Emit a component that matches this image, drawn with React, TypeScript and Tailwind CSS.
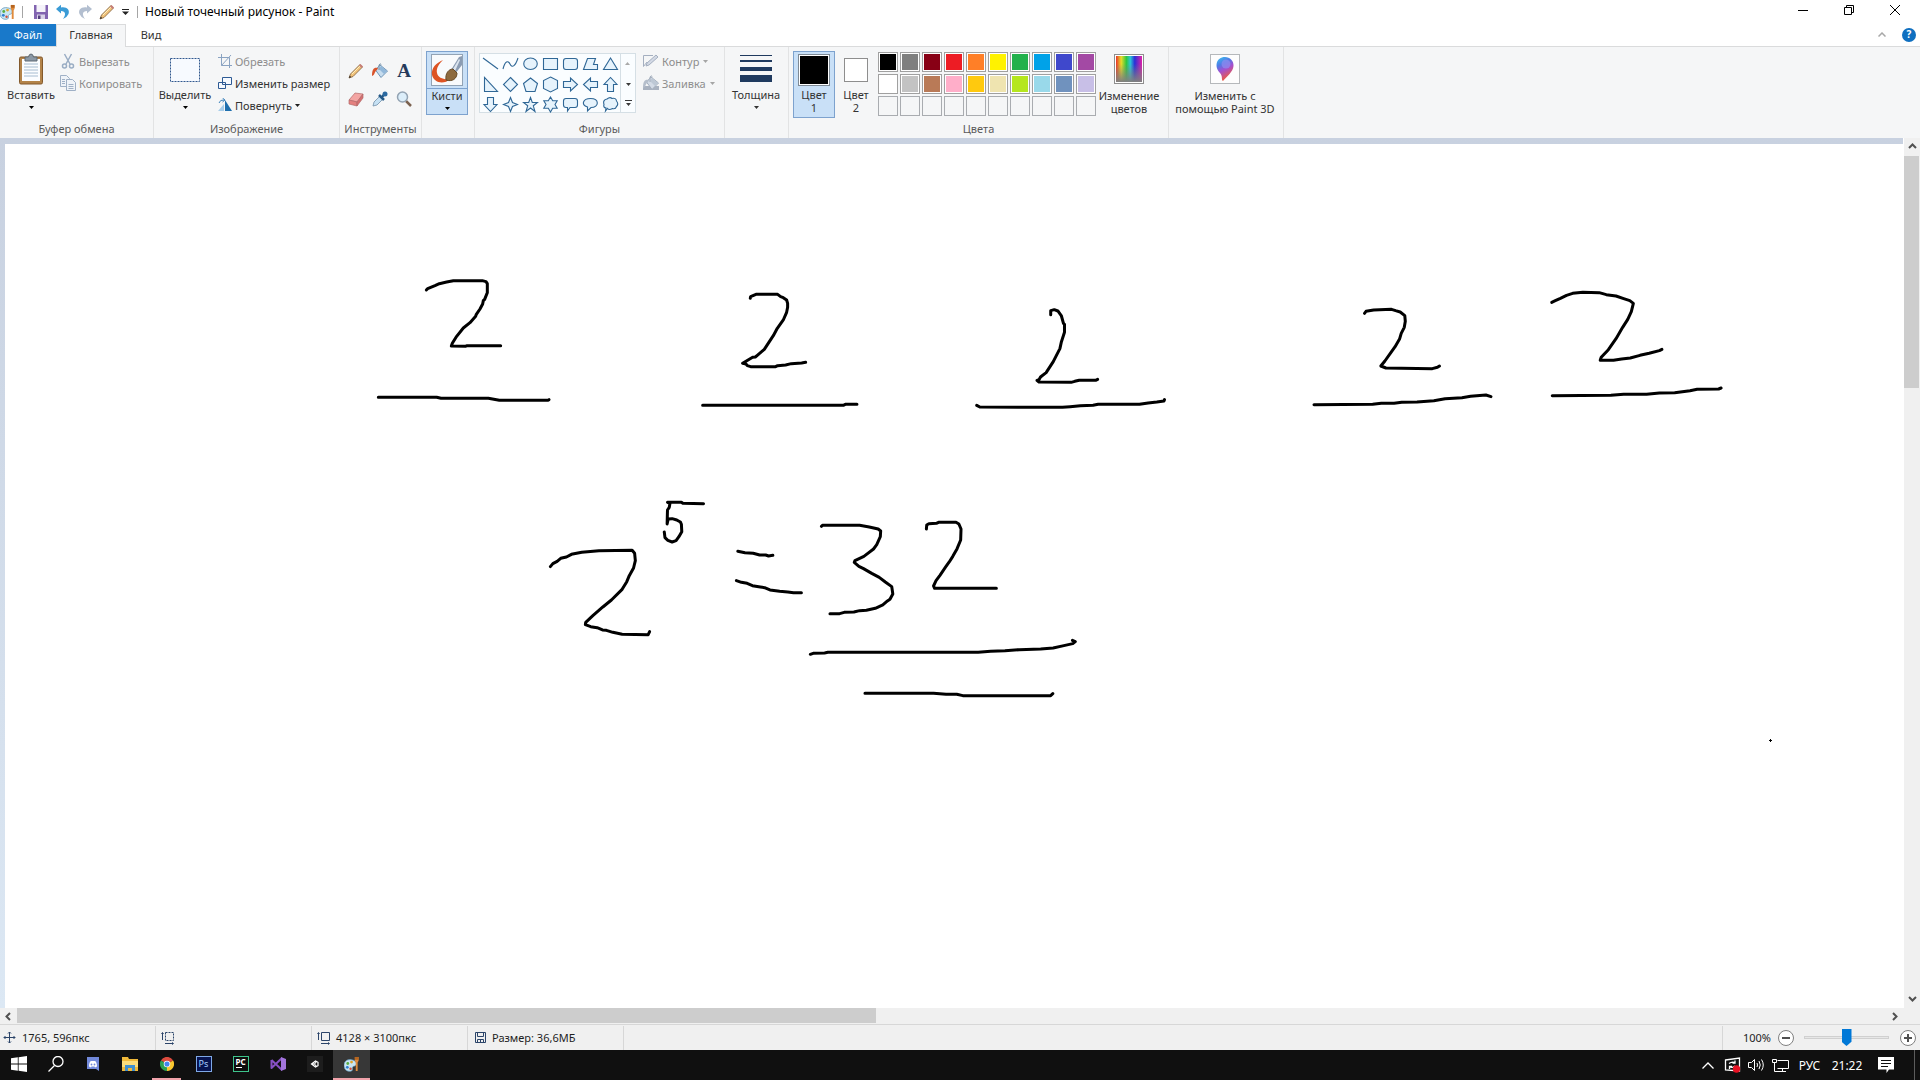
import React, { PropsWithChildren } from "react";

const palette = [
    "#000000", "#7f7f7f", "#880015", "#ed1c24", "#ff7f27", "#fff200", "#22b14c", "#00a2e8", "#3f48cc", "#a349a4",
    "#ffffff", "#c3c3c3", "#b97a57", "#ffaec9", "#ffc90e", "#efe4b0", "#b5e61d", "#99d9ea", "#7092be", "#c8bfe7",
    "", "", "", "", "", "", "", "", "", "",
];

const shapes: { name: string; d: string }[] = [
    { name: "Линия", d: "M1 2 16 13" },
    { name: "Кривая", d: "M1 13C3 5 6 4 8 8C10 12 13 11 16 2" },
    { name: "Овал", d: "M8.500 2C17.500 2 17.500 13.500 8.500 13.500C-.5 13.500 -.5 2 8.500 2Z" },
    { name: "Прямоугольник", d: "M1.500 2.500H15.500V13.500H1.500Z" },
    { name: "Скругленный прямоугольник", d: "M4 2.500H13Q15.500 2.500 15.500 5V11Q15.500 13.500 13 13.500H4Q1.500 13.500 1.500 11V5Q1.500 2.500 4 2.500Z" },
    { name: "Многоугольник", d: "M1.500 13.500 5.500 2.500H13.500L11.500 8.500H15.500V13.500Z" },
    { name: "Треугольник", d: "M8.500 2 15.500 13.500H1.500Z" },
    { name: "Прямоугольный треугольник", d: "M2.500 1.500V15.500H15.500Z" },
    { name: "Ромб", d: "M8.500 1.500 15.500 8.500 8.500 15.500 1.500 8.500Z" },
    { name: "Пятиугольник", d: "M8.500 2 15.500 7.500 13 15.500H4L1.500 7.500Z" },
    { name: "Шестиугольник", d: "M8.500 1 15.500 4.500V12.500L8.500 16 1.500 12.500V4.500Z" },
    { name: "Стрелка вправо", d: "M1.500 5.500H8.500V2L15.500 8.500 8.500 15V11.500H1.500Z" },
    { name: "Стрелка влево", d: "M15.500 5.500H8.500V2L1.500 8.500 8.500 15V11.500H15.500Z" },
    { name: "Стрелка вверх", d: "M5.500 15.500V8.500H2L8.500 1.500 15 8.500H11.500V15.500Z" },
    { name: "Стрелка вниз", d: "M5.500 1.500V8.500H2L8.500 15.500 15 8.500H11.500V1.500Z" },
    { name: "Четырехконечная звезда", d: "M8.500 1.500 10.500 6.500 15.500 8.500 10.500 10.500 8.500 15.500 6.500 10.500 1.500 8.500 6.500 6.500Z" },
    { name: "Пятиконечная звезда", d: "M8.500 1.500 10.300 6.500H15.500L11.300 9.800 13 15.500 8.500 12 4 15.500 5.700 9.800 1.500 6.500H6.700Z" },
    { name: "Шестиконечная звезда", d: "M8.500 1 10.700 4.700H15.200L13 8.500 15.200 12.300H10.700L8.500 16 6.300 12.300H1.800L4 8.500 1.800 4.700H6.300Z" },
    { name: "Выноска", d: "M4 2.500H13Q15.500 2.500 15.500 5V9Q15.500 11.500 13 11.500H8L5.500 15V11.500H4Q1.500 11.500 1.500 9V5Q1.500 2.500 4 2.500Z" },
    { name: "Овальная выноска", d: "M8.500 2.500C17.500 2.500 17.500 11.500 9 11.500L5.500 15V11C-1 9 .5 2.500 8.500 2.500Z" },
    { name: "Облако", d: "M5 3Q8 .5 10 2.500 14 1.500 14.500 5 17 8 14.500 10.500 13.500 13.500 10.500 12.500 7 14.500 5.500 12.500L3.500 15 4 12Q1 11.500 2 8.500 .5 4 5 3Z" },
];

// Freehand strokes, grouped by the area they were drawn in
const drawings: { transform: string; strokes: string[] }[] = [
    {
        transform: "translate(360 260) scale(.3333)",
        strokes: [
            "199,90 203,86 225,77 238,71 260,66 280,62 367,62 378,65 382,71 382,98 374,118 370,122 368,132 360,147 349,163 347,169 330,188 310,204 290,229 277,250 274,258 317,259 320,257 422,257",
            "55,412 230,412 243,415 385,415 418,421 564,421 567,419",
            "1171,115 1172,110 1188,103 1253,103 1262,110 1270,113 1280,120 1283,130 1283,142 1280,157 1270,180 1252,205 1240,227 1213,268 1192,286 1186,291 1178,292 1148,310 1158,312 1162,317 1172,320 1247,320 1253,317 1277,315 1294,311 1325,309 1337,307",
            "1028,436 1450,436 1456,433 1491,433",
        ],
    },
    {
        transform: "translate(940 280) scale(.5102 .3333)",
        strokes: [
            "217,104 217,92 224,89 231,93 238,108 242,130 244,133 244,157 238,185 235,206 222,245 208,278 197,291 194,299 190,301 194,306 257,307 264,304 273,301 305,301 309,298",
            "72,376 78,381 240,382 255,380 275,377 300,376 310,373 391,373 408,369 425,366 439,363 440,359",
            "832,100 835,94 850,90 885,88 893,92 902,96 911,107 912,124 910,142 904,160 901,176 892,200 884,217 872,243 864,258 874,264 965,266 975,262 979,258",
            "733,374 848,373 865,370 890,370 905,367 935,366 968,362 990,356 1023,353 1040,349 1070,345 1080,350",
            "1199,67 1206,62 1216,55 1228,46 1240,40 1260,37 1292,38 1306,44 1325,48 1340,56 1352,62 1359,70 1355,95 1348,118 1338,142 1325,176 1310,209 1296,232 1294,241 1320,241 1336,237 1353,234 1372,226 1390,220 1410,212 1415,208",
            "1200,347 1315,346 1340,343 1385,343 1410,339 1440,338 1470,332 1484,328 1526,327 1531,324",
        ],
    },
    {
        transform: "translate(530 480) scale(.3571 .3333)",
        strokes: [
            "57,260 64,251 76,244 86,235 102,231 116,223 145,217 193,212 286,211 293,220 295,242 290,264 278,287 271,305 258,328 228,360 204,381 176,407 156,427 155,434 170,440 188,443 203,450 214,451 232,457 258,463 331,464 335,455",
            "486,71 428,70 424,67 385,67 392,70 390,82 385,90 384,132 387,117 398,116 411,120 421,126 424,133 425,155 417,170 409,182 398,186 386,181 378,173 376,156",
            "582,214 602,218 625,220 643,225 660,225 668,228 680,226",
            "578,302 592,307 608,310 623,317 645,321 657,323 672,330 699,334 722,336 738,338 760,338",
            "816,139 819,136 923,136 950,141 975,147 982,153 981,170 971,194 962,207 935,229 910,242 908,247 921,259 934,266 957,280 978,292 995,306 1013,320 1016,342 1008,358 1001,363 988,375 967,385 942,391 923,392 907,396 880,397 867,401 840,401",
            "1110,147 1111,135 1117,131 1138,130 1144,127 1193,127 1201,132 1207,147 1206,180 1196,206 1184,229 1174,246 1164,261 1148,286 1137,302 1130,318 1133,325 1306,325",
            "785,523 793,520 825,519 834,517 1255,517 1290,514 1330,512 1370,509 1430,507 1465,504 1495,497 1520,491 1527,485 1519,481",
            "938,640 1130,640 1165,643 1195,643 1212,647 1458,647 1464,641",
        ],
    },
];

interface GroupProps {
    label?: string;
    className: string;
}

const Group: React.FC<PropsWithChildren<GroupProps>> = ({ label, className, children }) => (
    <section aria-label={label} className={`flex shrink-0 flex-col justify-between border-r border-[#e2e3e4] pt-1 ${className}`}>
        <div className="flex">{children}</div>
        {label && <p className="pb-[3px] text-center text-[#5a5a5a]">{label}</p>}
    </section>
);

const Caret = ({ className = "text-[#1e1e1e]" }: { className?: string }) => (
    <svg viewBox="0 0 5 3" className={`h-[3px] w-[5px] shrink-0 ${className}`} fill="currentColor">
        <path d="M0 0h5L2.500 3Z" />
    </svg>
);

const Pencil = () => (
    <svg viewBox="0 0 16 16" className="size-4">
        <path d="M1 15 2.500 11 12 1.500 14.500 4 5 13.500Z" fill="#f1c27a" stroke="#8a6a45" strokeWidth=".9" />
        <path d="m4 11 8-8" stroke="#fff0bd" />
        <path d="m11 2.500 1.500-1.500 2.500 2.500-1.500 1.500Z" fill="#c77e78" />
        <path d="m1 15 .8-2.200L3.200 14Z" fill="#222" />
    </svg>
);

const Bucket = ({ muted = false }: { muted?: boolean }) => (
    <svg viewBox="0 0 18 16" className="h-4 w-[18px]">
        {muted && <path d="M1 11h16v4H1Z" fill="#a9b2c0" />}
        <path d="M9 2 16.500 8 10 14.500 4.500 7Z" fill={muted ? "#d3dbe6" : "#c6dcee"} stroke={muted ? "#a3aebd" : "#6e94b5"} />
        <path d="m8 6 5 5 3-3-6-5Z" fill={muted ? "#bdc8d5" : "#92b8da"} />
        <path d="M8 7V2Q9-.5 10.500 2" fill="none" stroke={muted ? "#a3aebd" : "#7892a8"} />
        <path d="M7 5C3 4 1 6 1 13C4 12 3 9 6 7Z" fill={muted ? "#b5becb" : "#d8532b"} />
    </svg>
);

const PaletteIcon = () => (
    <svg viewBox="0 0 17 17" className="size-4">
        <path d="M8 4C2 3 0 7 0 10C0 15 4 17 8 16C10 15 8 12 10 11C14 11 15 5 8 4Z" fill="#c9e6f3" stroke="#6297b8" strokeWidth=".8" />
        <circle cx="4" cy="8" r="1.500" fill="#58ad43" />
        <circle cx="8" cy="6.500" r="1.500" fill="#e0a52e" />
        <circle cx="3.500" cy="12" r="1.500" fill="#2f7ed0" />
        <circle cx="7" cy="13.500" r="1.300" fill="#d1503c" />
        <path d="M11.500 1h4v4l-1 2v9h-2V7l-1-2Z" fill="#e08b3c" />
        <path d="M11.500 1h4v3h-4Z" fill="#b5651f" />
    </svg>
);

const titleTools = [
    {
        name: "Сохранить",
        icon: (
            <svg viewBox="0 0 16 16" className="size-4">
                <path d="M1 1h14v14H1Z" fill="#8264b0" />
                <path d="M3.500 1h9v7h-9Z" fill="#f5f3fa" />
                <path d="M4 10.500h8V15H4Z" fill="#d9d3e8" />
                <path d="M5 11.500h2.500V15H5Z" fill="#55407e" />
            </svg>
        ),
    },
    {
        name: "Отменить",
        icon: (
            <svg viewBox="0 0 16 16" className="size-4">
                <path d="M1 5 6 .8V3.500C12 2.500 15 6 13.500 10Q12 13.500 8 15C11 11 11 7 6 7V9.500Z" fill="#3a9bd6" />
            </svg>
        ),
    },
    {
        name: "Повторить",
        icon: (
            <svg viewBox="0 0 16 16" className="size-4">
                <path d="M15 5 10 .8V3.500C4 2.500 1 6 2.500 10Q4 13.500 8 15C5 11 5 7 10 7V9.500Z" fill="#b3bfd0" />
            </svg>
        ),
    },
    { name: "Карандаш", icon: <Pencil /> },
];

const TitleBar = () => (
    <header className="flex h-6 shrink-0 items-start bg-white">
        <div className="flex h-[23px] items-center">
            <PaletteIcon />
            <span className="ml-1.5 h-3 w-px bg-[#a5a5a5]" />
            <div className="ml-2 flex gap-0.5">
                {titleTools.map((tool) => (
                    <button key={tool.name} aria-label={tool.name} className="grid h-5 w-5 place-items-center">
                        {tool.icon}
                    </button>
                ))}
            </div>
            <button aria-label="Настройка панели быстрого доступа" className="ml-0.5 grid h-5 w-3 place-items-center">
                <svg viewBox="0 0 7 6" className="h-1.5 w-[7px]" fill="#222">
                    <path d="M0 0h7v1H0ZM0 2.500h7L3.500 6Z" />
                </svg>
            </button>
            <span className="ml-1.5 h-3 w-px bg-[#a5a5a5]" />
            <h1 className="ml-[7px] text-[12px] text-black">Новый точечный рисунок - Paint</h1>
        </div>
        <div className="ml-auto flex pr-0.5">
            <button aria-label="Свернуть" className="grid h-5 w-[46px] place-items-center">
                <svg viewBox="0 0 10 10" className="size-2.5" stroke="#000"><path d="M0 5.500h10" /></svg>
            </button>
            <button aria-label="Свернуть в окно" className="grid h-5 w-[46px] place-items-center">
                <svg viewBox="0 0 10 10" className="size-2.5" fill="none" stroke="#000"><path d="M.5 2.500h7v7h-7ZM2.500 2.500v-2h7v7h-2" /></svg>
            </button>
            <button aria-label="Закрыть" className="grid h-5 w-[46px] place-items-center">
                <svg viewBox="0 0 10 10" className="size-2.5" stroke="#000"><path d="m0 0 10 10M10 0 0 10" /></svg>
            </button>
        </div>
    </header>
);

const Tabs = () => (
    <nav className="flex h-[23px] shrink-0 items-stretch border-b border-[#dadbdc] bg-white text-[#333]">
        <button className="w-14 bg-[#1979ca] pb-0.5 text-white">Файл</button>
        <button className="-mb-px w-[70px] border border-b-0 border-[#dadbdc] bg-[#f5f6f7] pb-[3px]">Главная</button>
        <button className="w-[50px] pb-0.5">Вид</button>
        <div className="ml-auto flex items-center gap-4 pr-1 pb-px">
            <button aria-label="Свернуть ленту" className="-mr-1 w-3">
                <svg viewBox="0 0 8 5" className="h-[5px] w-2" fill="none" stroke="#a8a8a8" strokeWidth="1.500"><path d="M.5 4.500 4 1l3.500 3.500" /></svg>
            </button>
            <button aria-label="Справка" className="grid size-3.5 place-items-center rounded-full bg-[#0f6fc0] text-[10px] font-bold text-white">
                ?
            </button>
        </div>
    </nav>
);

const ClipboardGroup = () => (
    <Group label="Буфер обмена" className="w-[154px]">
        <button className="flex w-[60px] flex-col items-center pt-0.5 pl-0.5">
            <svg viewBox="0 0 26 32" className="h-8 w-[26px]">
                <rect x="1.500" y="4" width="23" height="27" rx="1.500" fill="#b38349" stroke="#83592c" />
                <path d="M4 6h18v22H4Z" fill="#fbfdff" />
                <path d="M6 11h14M6 14h14M6 17h14M6 20h14M6 23h14" stroke="#a6bcd0" />
                <path d="M7 4h3.500Q11 1 13 1t2.500 3H19v4H7Z" fill="#8b98a5" stroke="#5d6872" />
            </svg>
            <span className="mt-[3px]">Вставить</span>
            <Caret className="mt-[5px] text-black" />
        </button>
        <div className="text-[#8d8d8d]">
            <button className="flex h-[22px] items-center gap-[3px] pb-0.5">
                <svg viewBox="0 0 16 16" className="size-4" fill="none" stroke="#9aadc4" strokeWidth="1.500">
                    <path d="m4.500 1 5.500 10M11.500 1 6 11" />
                    <circle cx="4.500" cy="13" r="2" />
                    <circle cx="11.500" cy="13" r="2" />
                </svg>
                Вырезать
            </button>
            <button className="flex h-[22px] items-center gap-[3px] pb-0.5">
                <svg viewBox="0 0 16 16" className="size-4" fill="#eff3f8" stroke="#9fb0c6">
                    <path d="M.5.5h6l3 3v8h-9Z" />
                    <path d="M6.500 4.500h6l3 3v8h-9Z" />
                    <path d="M2 4.500h3M2 6.500h3M2 8.500h3M8.500 9.500h5M8.500 11.500h5M8.500 13.500h5" />
                </svg>
                Копировать
            </button>
        </div>
    </Group>
);

const ImageGroup = () => (
    <Group label="Изображение" className="w-[186px]">
        <button className="flex w-[62px] flex-col items-center pt-0.5">
            <svg viewBox="0 0 32 32" className="size-8">
                <rect x="1.500" y="5.500" width="29" height="23" fill="#f7faff" stroke="#31588f" strokeDasharray="2 1" />
            </svg>
            <span className="mt-[3px]">Выделить</span>
            <Caret className="mt-[5px] text-black" />
        </button>
        <div className="pl-0.5">
            <button className="flex h-[22px] items-center gap-[3px] pb-0.5 text-[#8d8d8d]">
                <svg viewBox="0 0 14 14" className="size-3.5" fill="none" stroke="#8aa3c2">
                    <path d="M0 3.500h11.500V14M3.500 0v11.500H14M3.500 11.500 13 1" />
                </svg>
                Обрезать
            </button>
            <button className="flex h-[22px] items-center gap-[3px] pb-0.5">
                <svg viewBox="0 0 14 14" className="size-3.5" fill="#f5f9ff" stroke="#2d5a94">
                    <path d="M4.500 1.500h9v7h-9ZM.5 6.500h7v6h-7Z" />
                </svg>
                Изменить размер
            </button>
            <button className="flex h-[22px] items-center gap-[3px] pb-0.5">
                <svg viewBox="0 0 14 14" className="size-3.5">
                    <path d="M7 13V2l7 11Z" fill="#1e6fae" />
                    <path d="M0 13 6 6v7Z" fill="#a7cdea" />
                    <path d="M1 5Q2 1.500 6 2M4.500 0 7 2 4.500 4" fill="none" stroke="#3e84bd" />
                </svg>
                Повернуть
                <Caret />
            </button>
        </div>
    </Group>
);

const ToolsGroup = () => (
    <Group label="Инструменты" className="w-[82px]">
        <div className="mx-auto grid grid-cols-3 pt-1.5 pr-px">
            <button aria-label="Карандаш" className="grid h-7 w-6 place-items-center"><Pencil /></button>
            <button aria-label="Заливка цветом" className="grid h-7 w-6 place-items-center"><Bucket /></button>
            <button aria-label="Текст" className="grid h-7 w-6 place-items-center font-['Liberation_Serif',serif] text-[19px] leading-5 font-bold text-[#253a5b]">A</button>
            <button aria-label="Ластик" className="grid h-7 w-6 place-items-center">
                <svg viewBox="0 0 16 16" className="size-4" stroke="#b26a6a" strokeWidth=".7">
                    <path d="m1 9 6-7 8 1-6 8Z" fill="#f3a5a3" />
                    <path d="m1 9 8 2v4l-8-2Z" fill="#e4807f" />
                    <path d="m9 11 6-8v4l-6 8Z" fill="#d66f70" />
                </svg>
            </button>
            <button aria-label="Палитра" className="grid h-7 w-6 place-items-center">
                <svg viewBox="0 0 16 16" className="size-4">
                    <path d="m1 15 1-4 6-6 3 3-6 6Z" fill="#c6e1f4" stroke="#7391aa" strokeWidth=".8" />
                    <path d="m7 4 5 5M10 6l3-3.500" stroke="#245785" strokeWidth="2.500" />
                    <circle cx="13" cy="3" r="2.500" fill="#2b69a0" />
                </svg>
            </button>
            <button aria-label="Масштаб" className="grid h-7 w-6 place-items-center">
                <svg viewBox="0 0 16 16" className="size-4">
                    <path d="m10 10 5 5" stroke="#7b6250" strokeWidth="2.500" />
                    <circle cx="6.500" cy="6" r="5" fill="#dceefa" stroke="#93a3b3" strokeWidth="1.500" />
                </svg>
            </button>
        </div>
    </Group>
);

const BrushGroup = () => (
    <Group className="w-[53px]">
        <button className="ml-1 flex h-16 w-[42px] flex-col items-center border border-[#7da2ce] bg-[#c9e0f7]">
            <span className="flex h-[37px] w-full justify-center border-b border-[#7da2ce] pt-0.5">
                <svg viewBox="0 0 32 32" className="size-8">
                    <rect x=".5" y=".5" width="31" height="31" fill="#f8fafc" stroke="#92a3b5" />
                    <path d="M12 6C5 9 0 14 1 21C3 29 13 31 19 25C13 26 7 24 6 19C5 14 8 10 12 6Z" fill="#dd5424" />
                    <path d="m20 16 8-13 3-1v9l-7 9Z" fill="#8b9cb3" />
                    <path d="m22 15 6-10 1 1-5 11Z" fill="#dbe4ee" />
                    <path d="M15 26C14 19 18 15 22 15L26 19C26 25 21 28 15 26Z" fill="#8d6b40" stroke="#674a27" />
                </svg>
            </span>
            <span>Кисти</span>
            <Caret className="mt-[5px] text-black" />
        </button>
    </Group>
);

const ShapesGroup = () => (
    <Group label="Фигуры" className="w-[250px]">
        <div className="mt-0.5 ml-1 flex h-[60px] border border-[#d5dfe5] bg-[#fafdff]">
            <div className="grid grid-cols-7 content-start">
                {shapes.map((shape) => (
                    <button key={shape.name} aria-label={shape.name} className="grid h-5 w-5 place-items-center">
                        <svg viewBox="0 0 17 17" className="size-[17px]" fill="#e6f3fc" stroke="#2f6796" strokeWidth="1.100">
                            <path d={shape.d} fill={shape.name === "Кривая" ? "none" : undefined} />
                        </svg>
                    </button>
                ))}
            </div>
            <div className="flex w-[15px] flex-col items-center border-l border-[#d5dfe5]">
                <button aria-label="Предыдущие фигуры" className="grid h-5 w-3.5 rotate-180 place-items-center">
                    <Caret className="text-[#a9a9a9]" />
                </button>
                <button aria-label="Следующие фигуры" className="grid h-5 w-3.5 place-items-center">
                    <Caret className="text-[#3a3a3a]" />
                </button>
                <button aria-label="Все фигуры" className="grid h-[18px] w-3.5 place-items-center">
                    <svg viewBox="0 0 7 6" className="h-1.5 w-[7px]" fill="#3a3a3a">
                        <path d="M0 0h7v1H0ZM1 3h5L3.500 6Z" />
                    </svg>
                </button>
            </div>
        </div>
        <div className="ml-1.5 text-[#8d8d8d]">
            <button className="flex h-[22px] items-center gap-0.5 pb-0.5">
                <svg viewBox="0 0 18 16" className="h-4 w-[18px]" fill="none" stroke="#a4afc0">
                    <path d="M11 2.500H1.500v11L5 9" />
                    <path d="m4 13 1-3 9-8 2 2-9 8Z" fill="#d3d9e5" />
                </svg>
                Контур
                <Caret className="ml-0.5 text-[#a5a5a5]" />
            </button>
            <button className="flex h-[22px] items-center gap-0.5 pb-0.5">
                <Bucket muted />
                Заливка
                <Caret className="ml-0.5 text-[#a5a5a5]" />
            </button>
        </div>
    </Group>
);

const SizeGroup = () => (
    <Group className="w-16">
        <button className="flex w-[62px] flex-col items-center pt-0.5">
            <svg viewBox="0 0 32 32" className="size-8" fill="#1f3a5f">
                <path d="M0 2h32v1H0ZM0 7h32v2H0ZM0 14h32v4H0ZM0 22h32v7H0Z" />
            </svg>
            <span className="mt-[3px]">Толщина</span>
            <Caret className="mt-[5px]" />
        </button>
    </Group>
);

const ColorsGroup = () => (
    <Group label="Цвета" className="w-[380px]">
        <button className="ml-1 flex h-[67px] w-[42px] flex-col items-center border border-[#7da2ce] bg-[#c9e0f7] pt-0.5">
            <span className="size-8 border border-[#7f8a95] bg-white p-px">
                <span className="block h-full bg-black" />
            </span>
            <span className="mt-0.5">Цвет</span>
            <span>1</span>
        </button>
        <button className="flex w-[42px] flex-col items-center pt-[7px]">
            <span className="size-6 border border-[#8e8e8e] bg-white" />
            <span className="mt-1.5">Цвет</span>
            <span>2</span>
        </button>
        <div className="ml-px grid grid-cols-10 content-start gap-0.5 pt-px">
            {palette.map((color, i) => (
                <button
                    key={i}
                    aria-label={color ? `Цвет ${color}` : "Пустая ячейка"}
                    className={color ? "size-5 border border-[#a0a0a0] bg-white p-px" : "size-5 border border-[#a9acb0]"}
                >
                    {color && <span className="block h-full" style={{ backgroundColor: color }} />}
                </button>
            ))}
        </div>
        <button className="flex w-[66px] flex-col items-center pt-[3px] leading-[13px]">
            <svg viewBox="0 0 30 30" className="size-[30px]">
                <defs>
                    <linearGradient id="hues">
                        <stop offset="0" stopColor="#e8332b" />
                        <stop offset=".2" stopColor="#e9dc29" />
                        <stop offset=".4" stopColor="#2fc53f" />
                        <stop offset=".55" stopColor="#2bc6d6" />
                        <stop offset=".72" stopColor="#2a2fd6" />
                        <stop offset="1" stopColor="#e021a8" />
                    </linearGradient>
                    <linearGradient id="fade" x2="0" y2="1">
                        <stop offset=".3" stopColor="#808080" stopOpacity="0" />
                        <stop offset="1" stopColor="#808080" />
                    </linearGradient>
                </defs>
                <rect x=".5" y=".5" width="29" height="29" fill="#fff" stroke="#8e8e8e" />
                <rect x="2" y="2" width="26" height="26" fill="url(#hues)" />
                <rect x="2" y="2" width="26" height="26" fill="url(#fade)" />
            </svg>
            <span className="mt-[5px]">Изменение<br />цветов</span>
        </button>
    </Group>
);

const Paint3DGroup = () => (
    <Group className="w-[115px]">
        <button className="flex w-28 flex-col items-center pt-[3px] leading-[13px]">
            <svg viewBox="0 0 30 30" className="size-[30px]">
                <defs>
                    <linearGradient id="drop" x2=".4" y2="1">
                        <stop offset="0" stopColor="#37c8f0" />
                        <stop offset=".35" stopColor="#4f7be6" />
                        <stop offset=".6" stopColor="#a34fd0" />
                        <stop offset="1" stopColor="#f05a3c" />
                    </linearGradient>
                </defs>
                <rect x=".5" y=".5" width="29" height="29" fill="#fdfdfd" stroke="#b5b8bb" />
                <path d="M15 3C20 3 24 7 23.500 12C23 18 17 22 13 27C11 26 13 22 10 19C4 13 6 3 15 3Z" fill="url(#drop)" />
                <circle cx="16" cy="10" r="4.500" fill="#8f8df0" opacity=".7" />
            </svg>
            <span className="mt-[5px]">Изменить с<br />помощью Paint 3D</span>
        </button>
    </Group>
);

const arrows: { [key: string]: string } = {
    up: "M1 6 4.500 2.500 8 6",
    down: "M1 3 4.500 6.500 8 3",
    left: "M6 1 2.500 4.500 6 8",
    right: "M3 1 6.500 4.500 3 8",
};

const ScrollArrow = ({ dir, label }: { dir: string; label: string }) => (
    <button aria-label={label} className="grid size-4 shrink-0 place-items-center">
        <svg viewBox="0 0 9 9" className="size-[9px]" fill="none" stroke="#505050" strokeWidth="2">
            <path d={arrows[dir]} />
        </svg>
    </button>
);

const Workspace = () => (
    <main className="flex min-h-0 flex-1 flex-col">
        <div className="flex min-h-0 flex-1">
            <div className="flex min-w-0 flex-1 bg-linear-to-b from-[#c8d1e0] to-[#dce8f4] pt-1.5 pl-[5px]">
                <svg
                    viewBox="5 144 1898 864"
                    preserveAspectRatio="xMinYMin slice"
                    className="h-full w-full min-w-0 bg-white"
                    fill="none"
                    stroke="#000"
                    strokeWidth="3"
                    strokeLinecap="round"
                    strokeLinejoin="round"
                >
                    {drawings.map((drawing) => (
                        <g key={drawing.transform} transform={drawing.transform}>
                            {drawing.strokes.map((points) => (
                                <polyline key={points} points={points} vectorEffect="non-scaling-stroke" />
                            ))}
                        </g>
                    ))}
                    <path d="M1769 740.500h3M1770.500 739v3" strokeWidth="1" strokeLinecap="butt" />
                </svg>
            </div>
            <div className="flex w-[17px] shrink-0 flex-col border-l border-white bg-[#f0f0f0] pb-0.5">
                <ScrollArrow dir="up" label="Прокрутить вверх" />
                <div className="mt-0.5 h-[calc(27%-2px)] w-[15px] bg-[#cdcdcd]" />
                <div className="mt-auto"><ScrollArrow dir="down" label="Прокрутить вниз" /></div>
            </div>
        </div>
        <div className="flex h-4 shrink-0 items-start bg-[#f0f0f0]">
            <ScrollArrow dir="left" label="Прокрутить влево" />
            <div className="ml-px h-[15px] w-[calc(45%-5px)] bg-[#cdcdcd]" />
            <div className="mr-[18px] ml-auto"><ScrollArrow dir="right" label="Прокрутить вправо" /></div>
        </div>
    </main>
);

const StatusBar = () => (
    <footer className="flex h-[26px] shrink-0 items-center border-t border-[#d7d7d7] bg-[#f0f0f0] text-[#1e1e1e]">
        <div className="flex h-6 w-[156px] items-center gap-1.5 border-r border-[#d7d7d7] pl-[3px]">
            <svg viewBox="0 0 13 13" className="size-[13px]" fill="none" stroke="#2b4469">
                <path d="M6.500 1v11M1 6.500h11M5 2.500 6.500 1 8 2.500M5 10.500 6.500 12 8 10.500M2.500 5 1 6.500 2.500 8M10.500 5 12 6.500 10.500 8" />
            </svg>
            1765, 596пкс
        </div>
        <div className="flex h-6 w-[156px] items-center border-r border-[#d7d7d7] pl-[5px]">
            <svg viewBox="0 0 14 14" className="size-3.5" fill="none" stroke="#2b4469">
                <path d="M4.500 1.500h8v8h-8Z" strokeDasharray="2 1" />
                <path d="M1.500 9V2M.5 3l1-1.500 1 1.500M4 12.500h8M11 11.500l1.500 1-1.500 1" />
            </svg>
        </div>
        <div className="flex h-6 w-[156px] items-center gap-[5px] border-r border-[#d7d7d7] pl-[5px]">
            <svg viewBox="0 0 14 14" className="size-3.5" fill="none" stroke="#2b4469">
                <path d="M4.500 1.500h8v8h-8ZM1.500 9V2M.5 3l1-1.500 1 1.500M4 12.500h8M11 11.500l1.500 1-1.500 1" />
            </svg>
            4128 × 3100пкс
        </div>
        <div className="flex h-6 w-[156px] items-center gap-[5px] border-r border-[#d7d7d7] pl-1.5">
            <svg viewBox="0 0 13 13" className="size-[13px]" fill="none" stroke="#2b4469">
                <path d="M1.500 1.500h10v10h-10ZM3.500 1.500v4h6v-4M3.500 11.500v-3h6v3M6.500 9v2" />
            </svg>
            Размер: 36,6МБ
        </div>
        <div className="ml-auto flex h-6 items-center border-l border-[#d7d7d7] pr-1 pl-5">
            <label htmlFor="zoom">100%</label>
            <button aria-label="Уменьшить" className="ml-[7px] grid size-4 place-items-center rounded-full border border-[#808080] bg-white">
                <span className="h-0.5 w-2 bg-[#505050]" />
            </button>
            <input
                id="zoom"
                type="range"
                defaultValue={50}
                className="mr-[11px] ml-2.5 h-[18px] w-[85px] appearance-none bg-transparent [&::-webkit-slider-runnable-track]:h-[3px] [&::-webkit-slider-runnable-track]:border [&::-webkit-slider-runnable-track]:border-[#d0d0d0] [&::-webkit-slider-runnable-track]:bg-[#e7e7e7] [&::-webkit-slider-thumb]:-mt-2 [&::-webkit-slider-thumb]:h-[17px] [&::-webkit-slider-thumb]:w-2.5 [&::-webkit-slider-thumb]:appearance-none [&::-webkit-slider-thumb]:bg-[#0078d7] [&::-webkit-slider-thumb]:[clip-path:polygon(0_0,100%_0,100%_75%,50%_100%,0_75%)]"
            />
            <button aria-label="Увеличить" className="grid size-4 place-items-center rounded-full border border-[#808080] bg-white">
                <svg viewBox="0 0 8 8" className="size-2" stroke="#505050" strokeWidth="2"><path d="M0 4h8M4 0v8" /></svg>
            </button>
        </div>
    </footer>
);

const taskApps: { name: string; state: string; icon: React.ReactNode }[] = [
    {
        name: "Пуск",
        state: "",
        icon: (
            <svg viewBox="0 0 16 16" className="size-4" fill="#fff">
                <path d="M0 2.300 6.800 1.300V7.600H0ZM7.600 1.200 16 0V7.600H7.600ZM0 8.400H6.800V14.700L0 13.700ZM7.600 8.400H16V16L7.600 14.800Z" />
            </svg>
        ),
    },
    {
        name: "Поиск",
        state: "",
        icon: (
            <svg viewBox="0 0 16 16" className="size-4" fill="none" stroke="#fff" strokeWidth="1.300">
                <circle cx="10" cy="5.500" r="5" />
                <path d="M6.500 9.500.5 15.500" />
            </svg>
        ),
    },
    {
        name: "Discord",
        state: "",
        icon: (
            <svg viewBox="0 0 14 14" className="size-3.5">
                <path d="M1 0h12v14l-3-2H1Z" fill="#7289da" />
                <path d="M3 9.500C3 6 4 4 5.500 4h3C10 4 11 6 11 9.500L9 10.500 8.500 9.500h-3L5 10.500Z" fill="#fff" />
                <circle cx="5.500" cy="7.500" r=".9" fill="#7289da" />
                <circle cx="8.500" cy="7.500" r=".9" fill="#7289da" />
            </svg>
        ),
    },
    {
        name: "Проводник",
        state: "",
        icon: (
            <svg viewBox="0 0 16 14" className="h-3.5 w-4">
                <path d="M0 0h6l1 2h9v12H0Z" fill="#f0b93a" />
                <path d="M0 4h16v6H0Z" fill="#fbdc7c" />
                <path d="M3 14V8h10v6h-3v-3H6v3Z" fill="#3f8fd0" />
            </svg>
        ),
    },
    {
        name: "Chrome",
        state: "open",
        icon: (
            <svg viewBox="0 0 16 16" className="size-3.5">
                <path d="M8 8 1 4A8 8 0 0 1 15 4Z" fill="#dd4b3e" />
                <path d="M8 8 15 4A8 8 0 0 1 8 16Z" fill="#fbc72f" />
                <path d="M8 8V16A8 8 0 0 1 1 4Z" fill="#2da052" />
                <circle cx="8" cy="8" r="3.700" fill="#fff" />
                <circle cx="8" cy="8" r="2.900" fill="#4384ee" />
            </svg>
        ),
    },
    {
        name: "Photoshop",
        state: "",
        icon: <span className="grid size-4 place-items-center border border-[#7fa9e6] bg-[#071450] text-[9px] leading-3 text-[#a5cdff]">Ps</span>,
    },
    {
        name: "PyCharm",
        state: "",
        icon: (
            <span className="flex size-4 flex-col items-start border border-[#3ec48b] bg-[#0d0d0d] pl-0.5 text-[8px] leading-[9px] font-bold text-white">
                PC
                <span className="mt-px h-px w-1.5 bg-white" />
            </span>
        ),
    },
    {
        name: "Visual Studio",
        state: "",
        icon: (
            <svg viewBox="0 0 16 16" className="size-4" fill="none">
                <path d="M1.500 4v8L12 2M1.500 4 12 14" stroke="#8750c4" strokeWidth="2" strokeLinejoin="round" />
                <path d="M11 1 16 3v10l-5 2Z" fill="#a274dc" />
            </svg>
        ),
    },
    {
        name: "Unity",
        state: "",
        icon: (
            <svg viewBox="0 0 16 16" className="size-4" fill="none" stroke="#fff" strokeWidth="1.200">
                <path d="M0 0h16v16H0Z" fill="#1d1d1d" stroke="none" />
                <path d="M4.500 8 8.500 5 11 6.300v3.400L8.500 11ZM7.500 8h-3M7.500 8l2-2.500M7.500 8l2 2.500" />
            </svg>
        ),
    },
    { name: "Paint", state: "active", icon: <PaletteIcon /> },
];

const taskStates: { [key: string]: string } = {
    "": "w-[37px] border-transparent",
    open: "mx-1 w-[29px] border-[#f1a3ab]",
    active: "w-[37px] border-[#f1a3ab] bg-[#373737]",
};

const Taskbar = () => (
    <div className="flex h-[30px] shrink-0 bg-[#101010] text-[12px] text-white">
        {taskApps.map((app) => (
            <button key={app.name} aria-label={app.name} className={`grid h-[30px] place-items-center border-b-2 ${taskStates[app.state]}`}>
                {app.icon}
            </button>
        ))}
        <div className="ml-auto flex items-center">
            <button aria-label="Скрытые значки" className="grid h-full w-6 place-items-center">
                <svg viewBox="0 0 12 7" className="h-[7px] w-3" fill="none" stroke="#fff" strokeWidth="1.300"><path d="m.5 6.500 5.500-5.500 5.500 5.500" /></svg>
            </button>
            <button aria-label="Обновления" className="grid h-full w-6 place-items-center">
                <svg viewBox="0 0 17 16" className="h-4 w-[17px]" fill="none" stroke="#fff" strokeWidth="1.300">
                    <path d="M1.500 3 15.500 1v13l-14-1Z" />
                    <path d="M5 6.500Q8.500 4 11 6M11 3.500V6H8.500M11 9Q8 11.500 5.500 9.500M5.500 12V9.500H8" />
                    <circle cx="12.500" cy="12" r="3.700" fill="#e81123" stroke="none" />
                </svg>
            </button>
            <button aria-label="Громкость" className="grid h-full w-6 place-items-center">
                <svg viewBox="0 0 17 14" className="h-3.5 w-[17px]" fill="none" stroke="#fff">
                    <path d="M.5 4.500h3l3-3v11l-3-3h-3ZM9 5q1 2 0 4M11 3q2.500 4 0 8M13.500 1.500q3.500 5.500 0 11" />
                </svg>
            </button>
            <button aria-label="Сеть" className="grid h-full w-6 place-items-center">
                <svg viewBox="0 0 17 15" className="h-[15px] w-[17px]" fill="none" stroke="#fff">
                    <path d="M5.500 2.500h11v8h-11M.5 1.500h4v3h-4ZM2.500 4.500v9h9M10.500 10.500v3M7 13.500h7" />
                </svg>
            </button>
            <button className="w-[35px] text-center">РУС</button>
            <time className="w-10 text-center">21:22</time>
            <button aria-label="Уведомления" className="grid h-full w-[38px] place-items-center">
                <svg viewBox="0 0 16 16" className="size-4">
                    <path d="M0 0h16v12.500h-5L8.500 16V12.500H0Z" fill="#fff" />
                    <path d="M3 3.500h10M3 6.500h10M3 9.500h7" stroke="#101010" />
                </svg>
            </button>
            <span className="mr-[5px] ml-[9px] h-full w-px bg-[#5c5c5c]" />
        </div>
    </div>
);

const App: React.FC = () => {
    return (
        <div className="flex h-screen flex-col overflow-hidden bg-white font-['Noto_Sans','Open_Sans',sans-serif] text-[11px] leading-[13px] text-[#333]">
            <TitleBar />
            <Tabs />
            <div className="flex h-[91px] shrink-0 bg-[#f5f6f7]">
                <ClipboardGroup />
                <ImageGroup />
                <ToolsGroup />
                <BrushGroup />
                <ShapesGroup />
                <SizeGroup />
                <ColorsGroup />
                <Paint3DGroup />
            </div>
            <Workspace />
            <StatusBar />
            <Taskbar />
        </div>
    );
};

export default App;
